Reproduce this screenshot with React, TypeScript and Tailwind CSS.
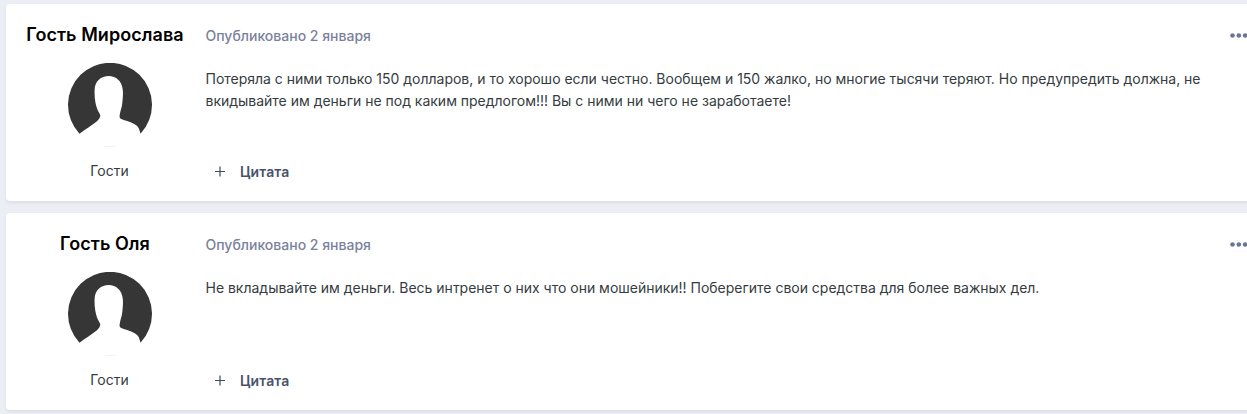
interface Post {
  id: number;
  author: string;
  group: string;
  date: string;
  text: string;
}

const posts: Post[] = [
  {
    id: 1,
    author: 'Гость Мирослава',
    group: 'Гости',
    date: 'Опубликовано 2 января',
    text: 'Потеряла с ними только 150 долларов, и то хорошо если честно. Вообщем и 150 жалко, но многие тысячи теряют. Но предупредить должна, не вкидывайте им деньги не под каким предлогом!!! Вы с ними ни чего не заработаете!',
  },
  {
    id: 2,
    author: 'Гость Оля',
    group: 'Гости',
    date: 'Опубликовано 2 января',
    text: 'Не вкладывайте им деньги. Весь интренет о них что они мошейники!! Поберегите свои средства для более важных дел.',
  },
];

function Avatar() {
  return (
    <svg width="84" height="84" viewBox="0 0 84 84" aria-hidden="true">
      <path
        fill="#363636"
        d="M11.5 70.7A42 42 0 1 1 72.5 70.7C71.5 67 71 64.5 68.5 62.5C64 59 57 57.8 52.8 55.8C51.3 55 51.5 53.5 51.8 51.5C52.2 48 53.8 45 54.3 40C54.8 35 55.2 31 54.8 27C54 18 48 13 40.7 13C33 13 27 18 26.6 27C26.3 35 27.5 41 29.2 46C30.2 49 32.3 51 32.3 52.8C32 54.5 31 56.5 29 58.3C24 62.5 17 66.5 11.5 70.7Z"
      />
      <path fill="#e9e9e9" d="M34.5 83H49.5A42 42 0 0 1 34.5 83Z" />
    </svg>
  );
}

function MoreButton() {
  return (
    <button type="button" aria-label="Ещё" className="mt-[29px] h-[5px] w-[18px] shrink-0">
      <svg width="18" height="5" viewBox="0 0 18 5" fill="#6b7691">
        <circle cx="2.5" cy="2.5" r="2.3" />
        <circle cx="8.8" cy="2.5" r="2.3" />
        <circle cx="15.1" cy="2.5" r="2.3" />
      </svg>
    </button>
  );
}

function PostCard({ post }: { post: Post }) {
  return (
    <article className="flex h-[197px] w-[1256px] rounded bg-white shadow-[0_2px_4px_-1px_rgba(0,0,0,0.1)]">
      <aside className="flex w-[198px] shrink-0 flex-col items-center pt-[18px]">
        <h3 className="text-lg leading-[25px] font-semibold tracking-[0.06px] whitespace-nowrap text-black">
          {post.author}
        </h3>
        <div className="mt-4 ml-[10px]">
          <Avatar />
        </div>
        <p className="mt-[14px] ml-[9px] text-sm leading-5 text-[#353c41]">{post.group}</p>
      </aside>
      <div className="flex w-[1026px] shrink-0 flex-col pl-[1.5px]">
        <p className="mt-[22px] text-sm leading-5 font-medium text-[#7a829b]">{post.date}</p>
        <p className="mt-[22px] h-[88px] w-[1015px] text-sm leading-[22px] tracking-[-0.01px] text-[#353c41]">
          {post.text}
        </p>
        <div className="mt-[6px] flex items-center pl-[9.5px] text-sm leading-5 text-[#3d4a63]">
          <svg
            width="10"
            height="11"
            viewBox="0 0 10 11"
            stroke="currentColor"
            strokeWidth="1.2"
            className="mb-[2px]"
            aria-hidden="true"
          >
            <path d="M0 5.5H10M5 .5V10.5" />
          </svg>
          <button type="button" className="ml-[15px] font-semibold tracking-[0.1px] text-[#48536a]">
            Цитата
          </button>
        </div>
      </div>
      <MoreButton />
    </article>
  );
}

export default function App() {
  return (
    <main className="h-[414px] w-full overflow-hidden bg-[#ebeef4] pt-1 pl-[6px] font-['Inter','Liberation_Sans',sans-serif]">
      <div className="flex flex-col gap-3">
        {posts.map((post) => (
          <PostCard key={post.id} post={post} />
        ))}
      </div>
    </main>
  );
}
